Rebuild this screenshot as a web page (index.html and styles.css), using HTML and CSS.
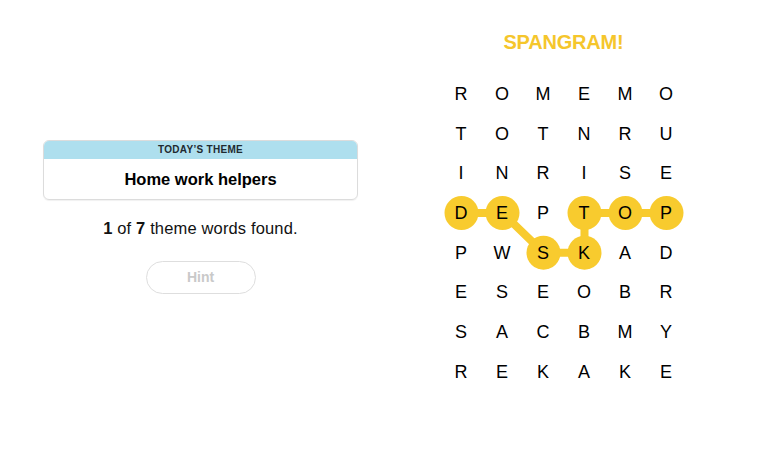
FILE: index.html
```html
<!DOCTYPE html>
<html>
<head>
<meta charset="utf-8">
<link rel="stylesheet" href="styles.css">
</head>
<body>
<main class="page">
  <section class="left">
    <div class="theme-card">
      <div class="theme-head">TODAY’S THEME</div>
      <div class="theme-body">Home work helpers</div>
    </div>
    <p class="found"><b>1</b> of <b>7</b> theme words found.</p>
    <button class="hint">Hint</button>
  </section>
  <section class="right">
    <div class="status">SPANGRAM!</div>
    <div class="board">
      <svg class="paths" width="246" height="318" viewBox="0 0 246 318">
        <g stroke="#f8cb2e" stroke-width="8" stroke-linecap="round" fill="none">
          <polyline points="20.5,138.95 61.5,138.95 102.5,178.65 143.5,178.65 143.5,138.95 184.5,138.95 225.5,138.95"/>
        </g>
        <g fill="#f8cb2e">
          <circle cx="20.5" cy="138.95" r="17"/>
          <circle cx="61.5" cy="138.95" r="17"/>
          <circle cx="102.5" cy="178.65" r="17"/>
          <circle cx="143.5" cy="178.65" r="17"/>
          <circle cx="143.5" cy="138.95" r="17"/>
          <circle cx="184.5" cy="138.95" r="17"/>
          <circle cx="225.5" cy="138.95" r="17"/>
        </g>
      </svg>
      <div class="grid">
        <span>R</span><span>O</span><span>M</span><span>E</span><span>M</span><span>O</span>
        <span>T</span><span>O</span><span>T</span><span>N</span><span>R</span><span>U</span>
        <span>I</span><span>N</span><span>R</span><span>I</span><span>S</span><span>E</span>
        <span>D</span><span>E</span><span>P</span><span>T</span><span>O</span><span>P</span>
        <span>P</span><span>W</span><span>S</span><span>K</span><span>A</span><span>D</span>
        <span>E</span><span>S</span><span>E</span><span>O</span><span>B</span><span>R</span>
        <span>S</span><span>A</span><span>C</span><span>B</span><span>M</span><span>Y</span>
        <span>R</span><span>E</span><span>K</span><span>A</span><span>K</span><span>E</span>
      </div>
    </div>
  </section>
</main>
</body>
</html>
```

FILE: styles.css
```css
* { box-sizing: border-box; }
html, body { margin: 0; padding: 0; background: #fff; }
body {
  font-family: "Liberation Sans", Arial, sans-serif;
  color: #121212;
  width: 768px;
  height: 455px;
  overflow: hidden;
}
.page {
  display: flex;
  padding-left: 43px;
  gap: 82.5px;
}
.left {
  width: 315px;
  padding-top: 140px;
  display: flex;
  flex-direction: column;
  align-items: center;
}
.theme-card {
  width: 315px;
  border: 1px solid #dcdcdc;
  border-radius: 6px;
  overflow: hidden;
  box-shadow: 0 1px 1px rgba(0,0,0,0.06);
}
.theme-head {
  background: #aedfee;
  height: 18px;
  line-height: 18px;
  text-align: center;
  font-size: 10px;
  font-weight: 700;
  letter-spacing: 0.3px;
  color: #1f2a30;
}
.theme-body {
  height: 40px;
  line-height: 40px;
  text-align: center;
  font-size: 16.5px;
  font-weight: 700;
  color: #000;
}
.found {
  margin: 18px 0 0;
  font-size: 16.5px;
  line-height: 20px;
  letter-spacing: 0.15px;
  color: #121212;
}
.found b { font-weight: 700; }
.hint {
  margin-top: 23px;
  width: 110px;
  height: 33px;
  border: 1px solid #dedede;
  border-radius: 17px;
  background: #fff;
  font-family: inherit;
  font-size: 14px;
  font-weight: 700;
  color: #c9c9c9;
  padding: 0 0 2px;
}
.right {
  width: 246px;
  padding-top: 30px;
  display: flex;
  flex-direction: column;
  align-items: center;
}
.status {
  font-size: 20px;
  line-height: 24px;
  font-weight: 700;
  color: #f5c62c;
  letter-spacing: -0.2px;
}
.board {
  position: relative;
  margin-top: 20.5px;
  width: 246px;
  height: 318px;
}
.paths {
  position: absolute;
  left: 0;
  top: -0.5px;
}
.grid {
  position: relative;
  display: grid;
  grid-template-columns: repeat(6, 41px);
  grid-auto-rows: 39.7px;
}
.grid span {
  display: flex;
  align-items: center;
  justify-content: center;
  font-size: 18px;
  color: #000;
}
```
